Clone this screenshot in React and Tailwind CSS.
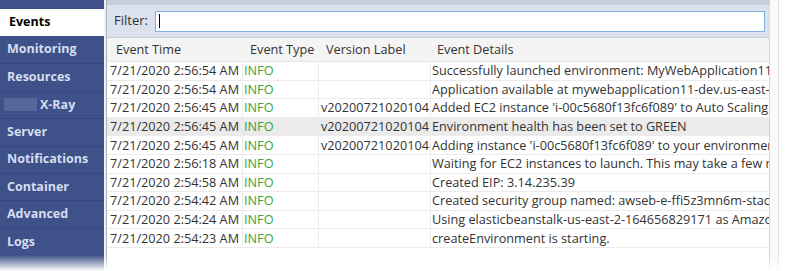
import React from "react";

const nav = ["Monitoring", "Resources", "X-Ray", "Server", "Notifications", "Container", "Advanced", "Logs"];

const rows = [
  ["7/21/2020 2:56:54 AM", "", "Successfully launched environment: MyWebApplication11-dev"],
  ["7/21/2020 2:56:54 AM", "", "Application available at mywebapplication11-dev.us-east-2.elasticbeanstalk.com"],
  ["7/21/2020 2:56:45 AM", "v20200721020104", "Added EC2 instance 'i-00c5680f13fc6f089' to Auto Scaling Group"],
  ["7/21/2020 2:56:45 AM", "v20200721020104", "Environment health has been set to GREEN"],
  ["7/21/2020 2:56:45 AM", "v20200721020104", "Adding instance 'i-00c5680f13fc6f089' to your environment."],
  ["7/21/2020 2:56:18 AM", "", "Waiting for EC2 instances to launch. This may take a few minutes."],
  ["7/21/2020 2:54:58 AM", "", "Created EIP: 3.14.235.39"],
  ["7/21/2020 2:54:42 AM", "", "Created security group named: awseb-e-ffi5z3mn6m-stack-AWSEBSecurityGroup"],
  ["7/21/2020 2:54:24 AM", "", "Using elasticbeanstalk-us-east-2-164656829171 as Amazon S3 storage bucket"],
  ["7/21/2020 2:54:23 AM", "", "createEnvironment is starting."],
];

export default function App() {
  return (
    <div
      className="relative w-[786px] h-[271px] overflow-hidden bg-white flex text-[12.7px] text-[#333]"
      style={{ fontFamily: "'Segoe UI', 'Open Sans', 'Noto Sans', sans-serif" }}
    >
      {/* Sidebar */}
      <div className="w-[104px] shrink-0 bg-[#3e5189] flex flex-col pt-[9px]">
        <div className="h-[27px] bg-white flex items-center pl-[9px] font-bold text-[12.5px] text-black">Events</div>
        {nav.map((n, i) => (
          <div
            key={n}
            className={`h-[27.4px] flex items-center pl-[7px] font-bold text-[12.5px] text-[#d5ddef] ${i > 0 ? "border-t border-[#34467c]" : ""}`}
          >
            {n === "X-Ray" ? (
              <>
                <span className="inline-block w-[33px] h-[13px] bg-[#55689a] mr-[3px] -ml-[3px]" />
                <span>X-Ray</span>
              </>
            ) : (
              n
            )}
          </div>
        ))}
      </div>

      {/* gap strip */}
      <div className="w-[2px] shrink-0 bg-[#eef1f6]" />

      {/* Main panel */}
      <div className="w-[664px] shrink-0 flex flex-col border-l border-[#aab2bf]">
        <div className="h-[5px] bg-[#c7cfdd]" />
        <div className="h-[32px] bg-[#dbe2ed] flex items-center pl-[7px] pr-[5px] gap-[7px]">
          <span className="text-[13px] text-[#333]">Filter:</span>
          <div className="flex-1 h-[21px] bg-white border border-[#7fb0e3] flex items-center pl-[3px]">
            <span className="w-[1px] h-[14px] bg-black" />
          </div>
        </div>
        <div className="flex-1 flex flex-col border-t border-[#c9ced6] border-r border-r-[#d0d4da] bg-white">
          <div className="h-[24px] shrink-0 flex items-center bg-[#f4f4f4] border-b border-[#e6e6e6] text-[#333]">
            <div className="w-[136px] pl-[9px] shrink-0">Event Time</div>
            <div className="w-[76px] pl-[7px] shrink-0">Event Type</div>
            <div className="w-[112px] pl-[7px] shrink-0">Version Label</div>
            <div className="flex-1 pl-[6px]">Event Details</div>
          </div>
          {rows.map((r, i) => (
            <div
              key={i}
              className={`h-[18.6px] shrink-0 flex items-center border-b border-[#ececec] whitespace-nowrap overflow-hidden ${i === 3 ? "bg-[#ebebeb]" : ""}`}
            >
              <div className="w-[136px] pl-[3px] shrink-0 h-full flex items-center border-r border-[#ececec] overflow-hidden">{r[0]}</div>
              <div className="w-[76px] pl-[1px] shrink-0 h-full flex items-center text-[#3aa23a] border-r border-[#ececec]">INFO</div>
              <div className="w-[112px] pl-[2px] shrink-0 h-full flex items-center border-r border-[#ececec] overflow-hidden">{r[1]}</div>
              <div className="flex-1 min-w-0 pl-[1px] h-full flex items-center overflow-hidden">{r[2]}</div>
            </div>
          ))}
        </div>
      </div>

      {/* Right edge */}
      <div className="flex-1 flex">
        <div className="w-[8px] bg-[#fafafa]" />
        <div className="w-[1px] bg-[#e2e2e2]" />
        <div className="flex-1 bg-white" />
      </div>

      {/* bottom fade */}
      <div className="pointer-events-none absolute left-0 right-0 bottom-0 h-[16px] bg-gradient-to-b from-transparent to-white" />
    </div>
  );
}
